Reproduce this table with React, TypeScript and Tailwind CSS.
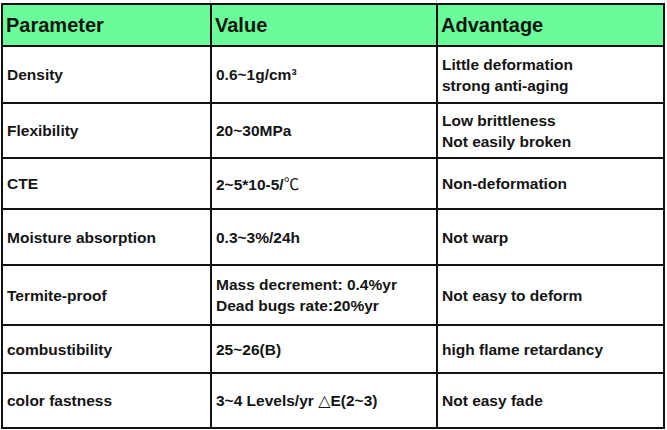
import type { ReactNode } from "react";

type Row = {
  readonly height: string;
  readonly cells: readonly ReactNode[];
};

const rows: Row[] = [
  {
    height: "h-[57px]",
    cells: [
      "Density",
      "0.6~1g/cm³",
      <>
        Little deformation
        <br />
        strong anti-aging
      </>,
    ],
  },
  {
    height: "h-[55px]",
    cells: [
      "Flexibility",
      "20~30MPa",
      <>
        Low brittleness
        <br />
        Not easily broken
      </>,
    ],
  },
  {
    height: "h-[51px]",
    cells: [
      "CTE",
      <>
        2~5*10-5/
        <span className="font-normal font-['Noto_Sans_CJK_SC','Liberation_Serif',serif]">℃</span>
      </>,
      "Non-deformation",
    ],
  },
  {
    height: "h-[56px]",
    cells: ["Moisture absorption", "0.3~3%/24h", "Not warp"],
  },
  {
    height: "h-[60px]",
    cells: [
      "Termite-proof",
      <>
        Mass decrement: 0.4%yr
        <br />
        Dead bugs rate:20%yr
      </>,
      "Not easy to deform",
    ],
  },
  {
    height: "h-[48px]",
    cells: ["combustibility", "25~26(B)", "high flame retardancy"],
  },
  {
    height: "h-[55px]",
    cells: [
      "color fastness",
      <>
        3~4 Levels/yr{" "}
        <span className="font-normal font-['DejaVu_Sans',sans-serif] text-[16px]">△</span>E(2~3)
      </>,
      "Not easy fade",
    ],
  },
];

export default function App() {
  return (
    <div className="h-[430px] w-[667px] overflow-hidden bg-white font-['Liberation_Sans',Arial,sans-serif] font-bold text-[#151515]">
      {/* faint spreadsheet gridlines above the table */}
      <div className="ml-[1px] grid h-[3px] w-[665px] grid-cols-[210px_226px_228px]">
        <div className="border-r border-[#d8d8d8]" />
        <div className="border-r border-[#d8d8d8]" />
        <div className="border-r border-[#e4e4e4]" />
      </div>

      <div className="ml-[1px] grid w-[664px] grid-cols-[209px_226px_227px] border-l-2 border-t-2 border-[#111]">
        {["Parameter", "Value", "Advantage"].map((label) => (
          <div
            key={label}
            className="flex h-[42px] items-center border-b-2 border-r-2 border-[#111] bg-[#6bfb9b] pl-[3px] text-[20px] text-[#0c160e]"
          >
            {label}
          </div>
        ))}

        {rows.map((row, i) =>
          row.cells.map((cell, j) => (
            <div
              key={`${i}-${j}`}
              className={`flex ${row.height} items-center border-b-2 border-r-2 border-[#111] pl-[4px] text-[15.5px] leading-[21px]`}
            >
              <div>{cell}</div>
            </div>
          )),
        )}
      </div>
    </div>
  );
}
